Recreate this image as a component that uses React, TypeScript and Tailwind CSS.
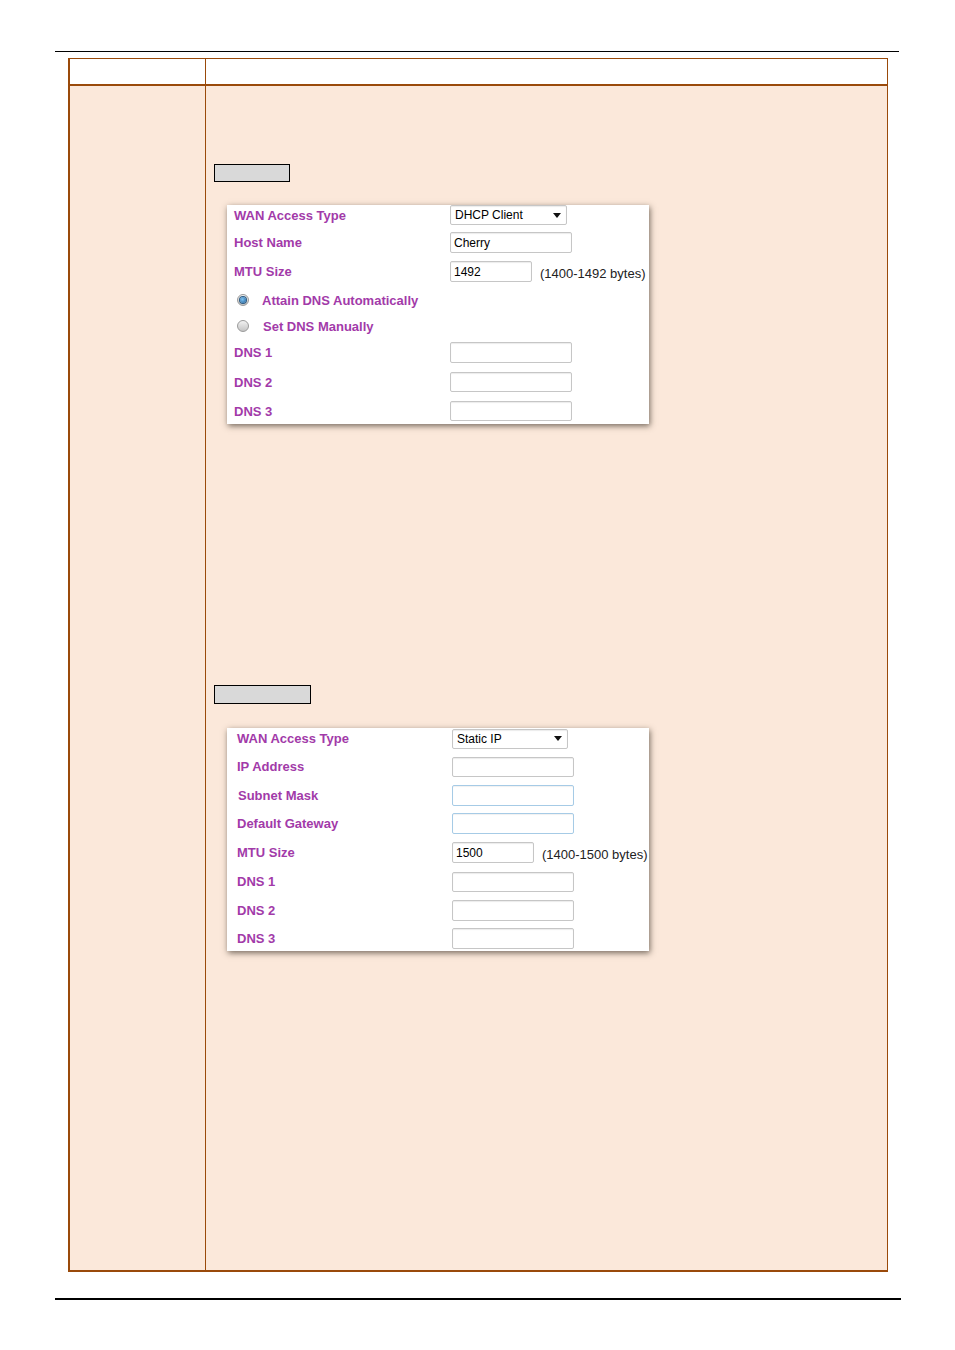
import type { ReactNode } from "react";

const labelCls = "text-[13px] font-bold leading-none text-[#a23aa9]";
const boxCls =
  "flex items-center rounded-[2px] border border-[#c6c6c6] bg-white px-[3px] text-[12px] leading-none text-black shadow-[inset_0_1px_1px_rgba(0,0,0,0.08)]";
const blueBoxCls =
  "rounded-[2px] border border-[#a6cbe6] bg-white shadow-[inset_0_1px_1px_rgba(0,0,0,0.06)]";

function Select({ value, width }: { value: string; width: string }) {
  return (
    <div className={`${boxCls} ${width} h-[20px] justify-between pl-[4px] pr-[5px]`}>
      <span>{value}</span>
      <svg width="8" height="5" viewBox="0 0 8 5">
        <path d="M0 0h8L4 5z" fill="#111" />
      </svg>
    </div>
  );
}

function Field({ value, width, h = "h-[21px]", blue }: { value?: string; width: string; h?: string; blue?: boolean }) {
  if (blue) return <div className={`${blueBoxCls} ${width} ${h}`} />;
  return <div className={`${boxCls} ${width} ${h}`}>{value}</div>;
}

function Row({ label, labelW, mt, h, children }: { label: string; labelW: string; mt: string; h: string; children: ReactNode }) {
  return (
    <div className={`flex items-center ${mt} ${h}`}>
      <div className={`${labelW} ${labelCls}`}>{label}</div>
      {children}
    </div>
  );
}

function Radio({ checked }: { checked?: boolean }) {
  return (
    <div className="flex h-[12px] w-[12px] items-center justify-center rounded-full border border-[#9a9a9a] bg-gradient-to-b from-[#f2f2f2] to-[#c4c4c4]">
      {checked && (
        <div className="h-[6px] w-[6px] rounded-full bg-[radial-gradient(circle_at_40%_40%,#7fc3f0,#1c5f9c)] shadow-[0_0_0_1px_#2b5a82]" />
      )}
    </div>
  );
}

function DhcpPanel() {
  return (
    <div className="ml-[13px] mt-[23px] h-[219px] w-[422px] bg-white pl-[7px] shadow-[1px_2px_6px_rgba(60,50,40,0.7)]">
      <Row label="WAN Access Type" labelW="w-[216px]" mt="mt-[1px]" h="h-[20px]">
        <Select value="DHCP Client" width="w-[117px]" />
      </Row>
      <Row label="Host Name" labelW="w-[216px]" mt="mt-[7px]" h="h-[21px]">
        <Field value="Cherry" width="w-[122px]" />
      </Row>
      <Row label="MTU Size" labelW="w-[216px]" mt="mt-[8px]" h="h-[21px]">
        <Field value="1492" width="w-[82px]" />
        <span className="ml-[8px] mt-[3px] text-[13px] leading-none text-[#222]">(1400-1492 bytes)</span>
      </Row>
      <div className="mt-[8px] flex h-[20px] items-center pl-[3px]">
        <Radio checked />
        <span className={`ml-[13px] ${labelCls}`}>Attain DNS Automatically</span>
      </div>
      <div className="mt-[6px] flex h-[20px] items-center pl-[3px]">
        <Radio />
        <span className={`ml-[14px] ${labelCls}`}>Set DNS Manually</span>
      </div>
      <Row label="DNS 1" labelW="w-[216px]" mt="mt-[6px]" h="h-[21px]">
        <Field width="w-[122px]" />
      </Row>
      <Row label="DNS 2" labelW="w-[216px]" mt="mt-[9px]" h="h-[20px]">
        <Field width="w-[122px]" h="h-[20px]" />
      </Row>
      <Row label="DNS 3" labelW="w-[216px]" mt="mt-[9px]" h="h-[20px]">
        <Field width="w-[122px]" h="h-[20px]" />
      </Row>
    </div>
  );
}

function StaticPanel() {
  return (
    <div className="ml-[13px] mt-[24px] h-[223px] w-[422px] bg-white pl-[10px] shadow-[1px_2px_6px_rgba(60,50,40,0.7)]">
      <Row label="WAN Access Type" labelW="w-[215px]" mt="mt-[1px]" h="h-[21px]">
        <Select value="Static IP" width="w-[116px]" />
      </Row>
      <Row label="IP Address" labelW="w-[215px]" mt="mt-[7px]" h="h-[21px]">
        <Field width="w-[122px]" h="h-[20px]" />
      </Row>
      <Row label="Subnet Mask" labelW="w-[215px] pl-[1px]" mt="mt-[8px]" h="h-[21px]">
        <Field width="w-[122px]" blue />
      </Row>
      <Row label="Default Gateway" labelW="w-[215px]" mt="mt-[7px]" h="h-[21px]">
        <Field width="w-[122px]" blue />
      </Row>
      <Row label="MTU Size" labelW="w-[215px]" mt="mt-[8px]" h="h-[21px]">
        <Field value="1500" width="w-[82px]" />
        <span className="ml-[8px] mt-[3px] text-[13px] leading-none text-[#222]">(1400-1500 bytes)</span>
      </Row>
      <Row label="DNS 1" labelW="w-[215px]" mt="mt-[8px]" h="h-[21px]">
        <Field width="w-[122px]" h="h-[20px]" />
      </Row>
      <Row label="DNS 2" labelW="w-[215px]" mt="mt-[8px]" h="h-[21px]">
        <Field width="w-[122px]" />
      </Row>
      <Row label="DNS 3" labelW="w-[215px]" mt="mt-[7px]" h="h-[21px]">
        <Field width="w-[122px]" />
      </Row>
    </div>
  );
}

export default function App() {
  return (
    <div className="h-[1350px] w-[955px] bg-white pt-[51px] font-['Liberation_Sans',Arial,sans-serif]">
      <div className="ml-[55px] h-px w-[844px] bg-black" />

      <div className="ml-[68px] mt-[6px] w-[820px] border-b-2 border-l-2 border-r border-t border-[#9a4a0a]">
        <div className="flex h-[27px] border-b-2 border-[#9a4a0a] bg-white">
          <div className="w-[136px] border-r border-[#9a4a0a]" />
          <div className="flex-1" />
        </div>
        <div className="flex h-[1184px] bg-[#fbe8da]">
          <div className="w-[136px] border-r border-[#9a4a0a]" />
          <div className="flex-1 pl-[8px] pt-[78px]">
            <div className="h-[18px] w-[76px] border border-black bg-[#d9d9d9]" />
            <DhcpPanel />
            <div className="mt-[261px] h-[19px] w-[97px] border border-black bg-[#d9d9d9]" />
            <StaticPanel />
          </div>
        </div>
      </div>

      <div className="ml-[55px] mt-[26px] h-[2px] w-[846px] bg-black" />
    </div>
  );
}
